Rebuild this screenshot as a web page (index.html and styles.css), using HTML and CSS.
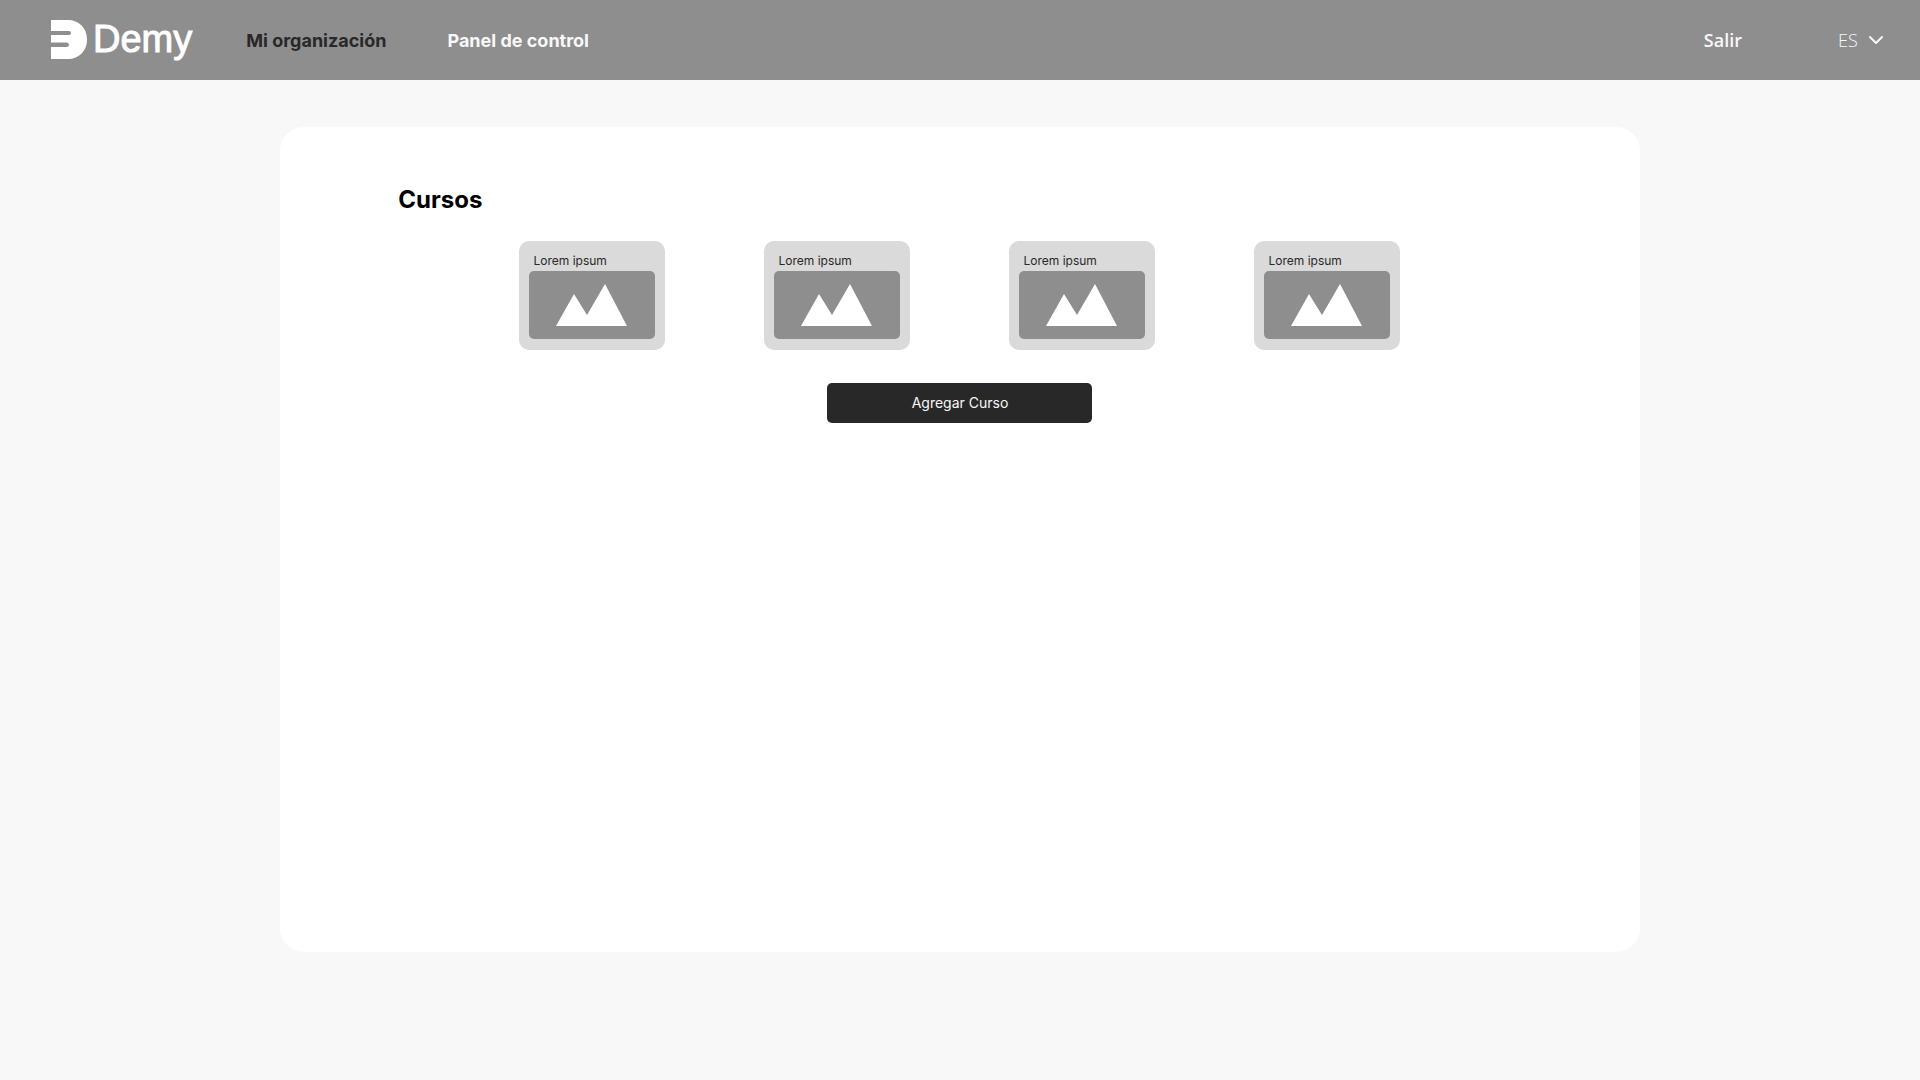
FILE: index.html
```html
<!DOCTYPE html>
<html lang="es">
<head>
  <meta charset="utf-8">
  <meta name="viewport" content="width=device-width, initial-scale=1">
  <title>Demy</title>
  <link rel="stylesheet" href="styles.css">
</head>
<body>
  <header class="topbar">
    <a class="brand" href="#">
      <svg class="brand-mark" viewBox="0 0 36 39" aria-hidden="true">
        <path d="M0 0H17C28 0 36 8 36 19.500S28 39 17 39H0V27H16Q18 26.500 18 25Q18 22.500 16 22.500H0V15H18Q20 15 20 13Q20 11 18 11H0Z"/>
      </svg>
      <span class="brand-name">Demy</span>
    </a>
    <nav class="nav">
      <a class="nav-link nav-link-active" href="#">Mi organización</a>
      <a class="nav-link" href="#">Panel de control</a>
    </nav>
    <div class="session">
      <a class="logout" href="#">Salir</a>
      <div class="language">
        <select class="language-select" aria-label="Idioma">
          <option>ES</option>
          <option>EN</option>
        </select>
        <svg class="language-arrow" viewBox="0 0 16 10" aria-hidden="true">
          <path d="M2 2L8 8L14 2"/>
        </svg>
      </div>
    </div>
  </header>
  <main class="panel">
    <h1 class="title">Cursos</h1>
    <div class="courses">
      <article class="course">
        <h2 class="course-name">Lorem ipsum</h2>
        <svg class="course-image" viewBox="0 0 126 68" aria-hidden="true"><path d="M27 55L45 23L58 44L76 13L98 55Z"/></svg>
      </article>
      <article class="course">
        <h2 class="course-name">Lorem ipsum</h2>
        <svg class="course-image" viewBox="0 0 126 68" aria-hidden="true"><path d="M27 55L45 23L58 44L76 13L98 55Z"/></svg>
      </article>
      <article class="course">
        <h2 class="course-name">Lorem ipsum</h2>
        <svg class="course-image" viewBox="0 0 126 68" aria-hidden="true"><path d="M27 55L45 23L58 44L76 13L98 55Z"/></svg>
      </article>
      <article class="course">
        <h2 class="course-name">Lorem ipsum</h2>
        <svg class="course-image" viewBox="0 0 126 68" aria-hidden="true"><path d="M27 55L45 23L58 44L76 13L98 55Z"/></svg>
      </article>
    </div>
    <button class="add-course" type="button">Agregar Curso</button>
  </main>
</body>
</html>
```

FILE: styles.css
```css
* {
  box-sizing: border-box;
}

body {
  margin: 0;
  background: #f8f8f8;
  color: #282828;
  font-family: Inter, "Liberation Sans", sans-serif;
}

a {
  color: inherit;
  text-decoration: none;
}

.topbar {
  display: flex;
  align-items: center;
  min-height: 80px;
  padding: 0 36px 2px 51px;
  background: #8e8e8e;
  color: #f8f8f8;
}

.brand {
  display: flex;
  align-items: center;
  gap: 6px;
  color: #fff;
}

.brand-mark {
  width: 36px;
  height: 39px;
  fill: currentColor;
}

.brand-name {
  font-family: "Liberation Sans", sans-serif;
  font-size: 38px;
  line-height: 40px;
  -webkit-text-stroke: 1px currentColor;
}

.nav {
  display: flex;
  gap: 61px;
  margin-left: 54px;
  padding-top: 4px;
  font-size: 18px;
  font-weight: 700;
  line-height: 24px;
}

.nav-link-active {
  color: #282828;
}

.session {
  display: flex;
  align-items: center;
  gap: 96px;
  margin-left: auto;
  padding-top: 2px;
  font-family: "Open Sans", "Noto Sans", sans-serif;
  font-size: 18px;
  line-height: 24px;
}

.logout {
  font-weight: 600;
}

.language {
  position: relative;
}

.language-select {
  display: block;
  width: 46px;
  height: 24px;
  padding: 0;
  border: 0;
  appearance: none;
  background: transparent;
  color: inherit;
  font: inherit;
  font-weight: 300;
}

.language-arrow {
  position: absolute;
  top: 7px;
  right: 0;
  width: 16px;
  height: 10px;
  fill: none;
  stroke: currentColor;
  stroke-width: 2;
  stroke-linecap: round;
  stroke-linejoin: round;
  pointer-events: none;
}

.panel {
  display: flex;
  flex-direction: column;
  width: 70.8%;
  min-height: calc(100vh - 255px);
  margin: 47px auto;
  padding: 57px 118px;
  border-radius: 24px;
  background: #fff;
}

.title {
  margin: 0;
  color: #000;
  font-size: 24px;
  font-weight: 700;
  line-height: 32px;
}

.courses {
  display: flex;
  flex-wrap: wrap;
  justify-content: center;
  gap: 32px 99px;
  margin-top: 25px;
}

.course {
  width: 146px;
  padding: 10px 10px 11px;
  border-radius: 10px;
  background: #dadada;
}

.course-name {
  margin: 0;
  padding: 0 4px;
  font-size: 12px;
  font-weight: 400;
  line-height: 20px;
}

.course-image {
  display: block;
  width: 100%;
  border-radius: 5px;
  background: #8e8e8e;
  fill: #fff;
}

.add-course {
  align-self: center;
  width: 265px;
  max-width: 100%;
  height: 40px;
  margin-top: 33px;
  border: 0;
  border-radius: 5px;
  background: #282828;
  color: #f8f8f8;
  font: 400 14px/20px Inter, "Liberation Sans", sans-serif;
}
```
